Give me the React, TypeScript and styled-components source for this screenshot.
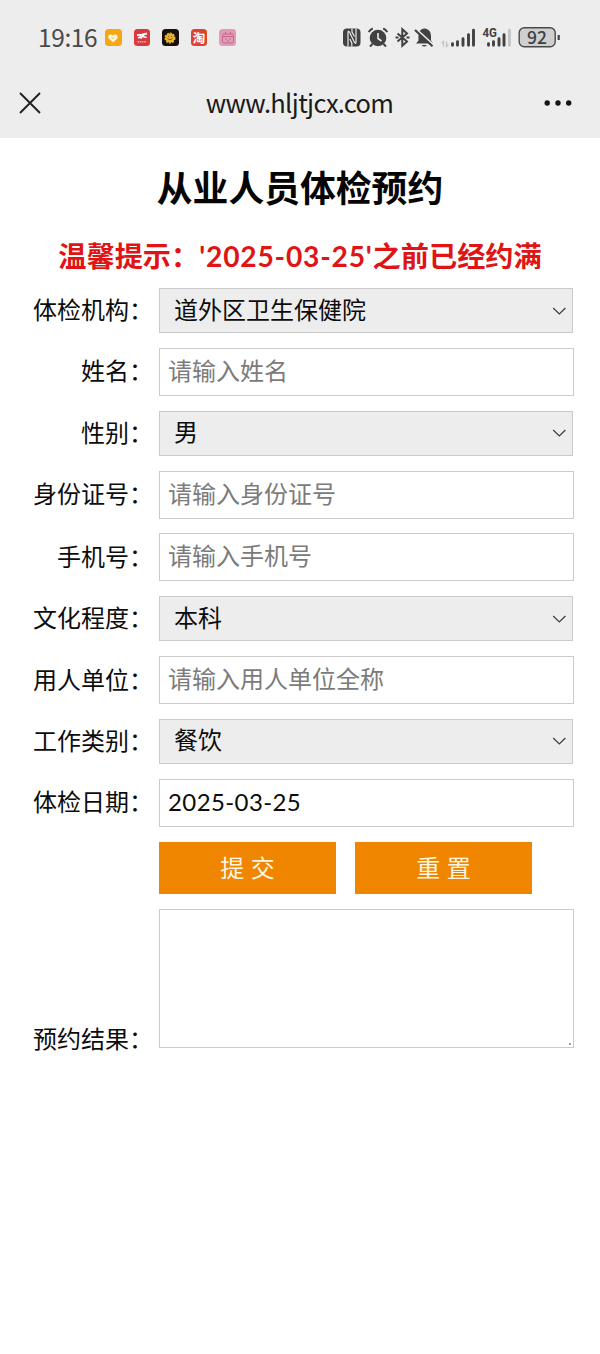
import React from "react";
import styled, { createGlobalStyle } from "styled-components";

const Global = createGlobalStyle`
  *, *::before, *::after { box-sizing: border-box; }
  body { margin: 0; background: #fff; }
  input, button, textarea { font: inherit; margin: 0; outline: 0; border-radius: 0; }
`;

const cjk = `"Noto Sans CJK SC", sans-serif`;

const Page = styled.div`
  width: 600px;
  min-height: 1354px;
  background: #fff;
  color: #0c0c0c;
  font: 24px/34px ${cjk};
`;

const StatusBar = styled.div`
  height: 70px;
  padding: 5px 40px 0 38px;
  background: #ededed;
  display: flex;
  align-items: center;
  justify-content: space-between;
`;

const Clock = styled.span`
  width: 67px;
  padding-bottom: 1px;
  color: #4a4a4a;
  font: 24.5px/30px ${cjk};
  letter-spacing: -0.4px;
  white-space: nowrap;
`;

const AppIcons = styled.div`
  display: flex;
  align-items: center;
  gap: 12px;
  margin-right: auto;
  svg { display: block; }
`;

const AppTile = styled.span<{ $bg: string }>`
  width: 16.6px;
  height: 16.6px;
  border-radius: 3.5px;
  background: ${(p) => p.$bg};
  color: #fff;
  display: flex;
  align-items: center;
  justify-content: center;
  font: 700 12.5px/16px ${cjk};
`;

const SystemIcons = styled.svg`
  display: block;
  width: 222px;
  height: 28px;
`;

const NavBar = styled.div`
  height: 68px;
  padding: 0 28px 0 19px;
  background: #ededed;
  display: grid;
  grid-template-columns: 68px 1fr 60px;
  align-items: center;
  > svg { margin-bottom: 3px; }
`;

const Url = styled.div`
  color: #1b1b1b;
  text-align: center;
  padding-bottom: 4px;
  font: 25.5px/34px ${cjk};
  letter-spacing: -0.7px;
  white-space: nowrap;
`;

const MoreIcon = styled.svg`
  justify-self: end;
`;

const Title = styled.h1`
  margin: 0;
  padding-top: 22px;
  height: 96px;
  text-align: center;
  font: 700 35.8px/52px ${cjk};
  color: #050505;
`;

const Notice = styled.p`
  margin: 0;
  height: 54px;
  text-align: center;
  font: 700 28.2px/42px ${cjk};
  color: #e01414;
  white-space: nowrap;
`;

const NoticeDate = styled.span`
  font-family: Lato, sans-serif;
  letter-spacing: 0.8px;
`;

const Form = styled.form`
  display: flex;
  flex-direction: column;
  gap: 14.85px;
`;

const Row = styled.div<{ $h: number }>`
  height: ${(p) => p.$h}px;
  display: grid;
  grid-template-columns: 153px 415px;
  column-gap: 6px;
`;

const Label = styled.label<{ $bottom?: boolean }>`
  text-align: right;
  white-space: nowrap;
  align-self: ${(p) => (p.$bottom ? "end" : "center")};
  margin-bottom: ${(p) => (p.$bottom ? -7 : 3)}px;
`;

const SelectBox = styled.div`
  width: 414px;
  border: 1.5px solid #cbcbcb;
  background: #ededed;
  padding: 0 5px 0 14px;
  display: flex;
  align-items: center;
  justify-content: space-between;
  span { padding-bottom: 4px; }
`;

const TextInput = styled.input`
  width: 415px;
  border: 1.5px solid #cbcbcb;
  background: #fff;
  padding: 0 8px 4px;
  color: #0c0c0c;
  &::placeholder { color: #7b7b7b; opacity: 1; }
`;

const DateInput = styled(TextInput)`
  font-family: Lato, sans-serif;
  letter-spacing: 0.4px;
  padding-bottom: 2px;
`;

const Buttons = styled.div`
  display: flex;
  gap: 19px;
  padding-left: 159px;
`;

const Button = styled.button`
  width: 177px;
  height: 52.5px;
  border: 0;
  padding: 0 0 2px;
  background: #f08500;
  color: #fff6e0;
  word-spacing: 1px;
`;

const Result = styled.textarea`
  width: 415px;
  height: 139px;
  border: 1.5px solid #cbcbcb;
  background: linear-gradient(#a0a0a0, #a0a0a0) right 2px bottom 2px / 2px 2px no-repeat #fff;
  resize: none;
`;

const Chevron = () => (
  <svg width="15" height="10" viewBox="0 0 15 10" fill="none" stroke="#3c3c3c" strokeWidth="1.2">
    <path d="M1.2 2 7.3 8 13.4 2" />
  </svg>
);

type Field = { label: string; value?: string; hint?: string; kind: "select" | "text" | "date" };

const fields: Field[] = [
  { label: "体检机构", value: "道外区卫生保健院", kind: "select" },
  { label: "姓名", hint: "请输入姓名", kind: "text" },
  { label: "性别", value: "男", kind: "select" },
  { label: "身份证号", hint: "请输入身份证号", kind: "text" },
  { label: "手机号", hint: "请输入手机号", kind: "text" },
  { label: "文化程度", value: "本科", kind: "select" },
  { label: "用人单位", hint: "请输入用人单位全称", kind: "text" },
  { label: "工作类别", value: "餐饮", kind: "select" },
  { label: "体检日期", value: "2025-03-25", kind: "date" },
];

function Control({ field }: { field: Field }) {
  if (field.kind === "select")
    return (
      <SelectBox>
        <span>{field.value}</span>
        <Chevron />
      </SelectBox>
    );
  if (field.kind === "date") return <DateInput defaultValue={field.value} />;
  return <TextInput placeholder={field.hint} />;
}

export default function App() {
  return (
    <Page>
      <Global />
      <StatusBar>
        <Clock>19:16</Clock>
        <AppIcons>
          <AppTile $bg="#f5a716">
            <svg width="14" height="14" viewBox="0 0 14 14">
              <path d="M7 11.500 2.800 7.600C1 5 4.500 1.800 7 4.600c2.500-2.800 6 .4 4.200 3z" fill="#fff6dc" />
              <path d="M5.500 6.500 7 7.800 8.500 6.500" fill="none" stroke="#f5a716" strokeWidth=".7" />
            </svg>
          </AppTile>
          <AppTile $bg="#d93a3e">
            <svg width="14" height="14" viewBox="0 0 14 14" fill="none" stroke="#fff">
              <path d="M2 4.200 7 3.700 12 2.500M9 3.500 5.500 7.500M8 5.500 11.500 6.500M3 7 6 5.500" strokeWidth="1.800" />
              <path d="M2.500 10.800h9" strokeWidth="1.500" strokeDasharray="1.500 .7" opacity=".6" />
            </svg>
          </AppTile>
          <AppTile $bg="#17100f">
            <svg width="14" height="14" viewBox="0 0 14 14">
              <circle cx="7" cy="7" r="4.600" fill="#e9b528" stroke="#e9b528" strokeWidth="1.800" strokeDasharray="2 1" />
              <path d="M4.500 7.500q2.500 2.500 5 0M5 5.500h1M8 5.500h1" stroke="#7b4a0c" fill="none" strokeWidth=".9" />
            </svg>
          </AppTile>
          <AppTile $bg="#dc4431">淘</AppTile>
          <AppTile $bg="#e39ab6">
            <svg width="14" height="14" viewBox="0 0 14 14" fill="none" stroke="#c4698d">
              <rect x="1.500" y="3" width="11" height="9" rx="1.500" />
              <path d="M4.500 1v2M9.500 1v2M2 5.500h10M5 7.500v1.500M9 7.500v1.500M6 10h2" />
            </svg>
          </AppTile>
        </AppIcons>
        <SystemIcons viewBox="338 24 222 28">
          <rect x="343" y="28.500" width="17.500" height="18" rx="4" fill="#414141" />
          <path d="M348 46.500V32.500q0-2 1.500-.5l5 10.500q1.500 2 1.500-.5V28.500M352 28.500v3.500l2.500 4.500M351.800 46.500v-3.500l-2-4" fill="none" stroke="#ededed" strokeWidth="1.200" />
          <circle cx="378" cy="38" r="8.300" fill="#414141" />
          <path d="M378 33v5.500l3.500 2.500" fill="none" stroke="#ededed" strokeWidth="1.600" />
          <path d="M368.800 32.200q1-2.700 4-3.700M387.200 32.200q-1-2.700-4-3.700M372.500 44l-2.500 2.500M383.500 44l2.500 2.500" stroke="#414141" strokeWidth="2" fill="none" />
          <path d="M397.500 33.500l9.500 8-4.700 4.200v-16.400l4.700 4.200-9.500 8M395.500 37.500h3M406.500 37.500h3" fill="none" stroke="#414141" strokeWidth="2" />
          <path d="M424.500 28.500c5 .5 6.500 4 6.500 8v4l2 3h-17l2.500-3v-4c0-4 1-7.500 6-8zM421.500 45h5.500q-2.700 3-5.500 0z" fill="#414141" />
          <path d="M415.500 28.500 433.500 45" stroke="#ededed" strokeWidth="2" />
          <path d="M415 30 432.500 46.300" stroke="#414141" strokeWidth="2.200" />
          <path d="M443.500 46.500v-5l-1.800 2M446.500 41.500v5l1.800-2" fill="none" stroke="#c4c4c4" strokeWidth="1.300" />
          <g stroke="#414141" strokeWidth="2.900" strokeLinecap="round">
            <path d="M452.500 45.300v-1.500M457.500 45.300v-3.500M463 45.300v-6.500M468.500 45.300v-10.500M473.500 45.300v-15" />
            <path d="M488.500 45.300v-1.500M493.500 45.300v-3.500M499 45.300v-6.500M504 45.300v-10.500" />
            <path d="M509.500 45.300v-15" stroke="#c4c4c4" />
          </g>
          <text x="482.500" y="37" fontFamily="Roboto, sans-serif" fontSize="12" fontWeight="700" fill="#414141" textLength="14.500" lengthAdjust="spacingAndGlyphs">4G</text>
          <rect x="519.200" y="27.700" width="36" height="19" rx="5" fill="#cfcfcf" stroke="#4a4a4a" strokeWidth="1.400" />
          <path d="M558.700 35v5" stroke="#414141" strokeWidth="2.200" />
          <text x="537" y="43.500" textAnchor="middle" fontFamily="Noto Sans CJK SC, sans-serif" fontSize="17.500" fontWeight="500" fill="#414141">92</text>
        </SystemIcons>
      </StatusBar>
      <NavBar>
        <svg width="22" height="22" viewBox="0 0 22 22" stroke="#222" strokeWidth="1.900">
          <path d="M1 1 21 21M21 1 1 21" />
        </svg>
        <Url>www.hljtjcx.com</Url>
        <MoreIcon width="28" height="8" viewBox="0 0 28 8" fill="#151515">
          <circle cx="3.200" cy="4" r="2.700" />
          <circle cx="14" cy="4" r="2.700" />
          <circle cx="24.700" cy="4" r="2.700" />
        </MoreIcon>
      </NavBar>
      <Title>从业人员体检预约</Title>
      <Notice>
        温馨提示：<NoticeDate>'2025-03-25'</NoticeDate>之前已经约满
      </Notice>
      <Form>
        {fields.map((f) => (
          <Row key={f.label} $h={f.kind === "select" ? 45 : 48}>
            <Label>{f.label}：</Label>
            <Control field={f} />
          </Row>
        ))}
        <Buttons>
          <Button type="button">提 交</Button>
          <Button type="button">重 置</Button>
        </Buttons>
        <Row $h={139}>
          <Label $bottom>预约结果：</Label>
          <Result />
        </Row>
      </Form>
    </Page>
  );
}
